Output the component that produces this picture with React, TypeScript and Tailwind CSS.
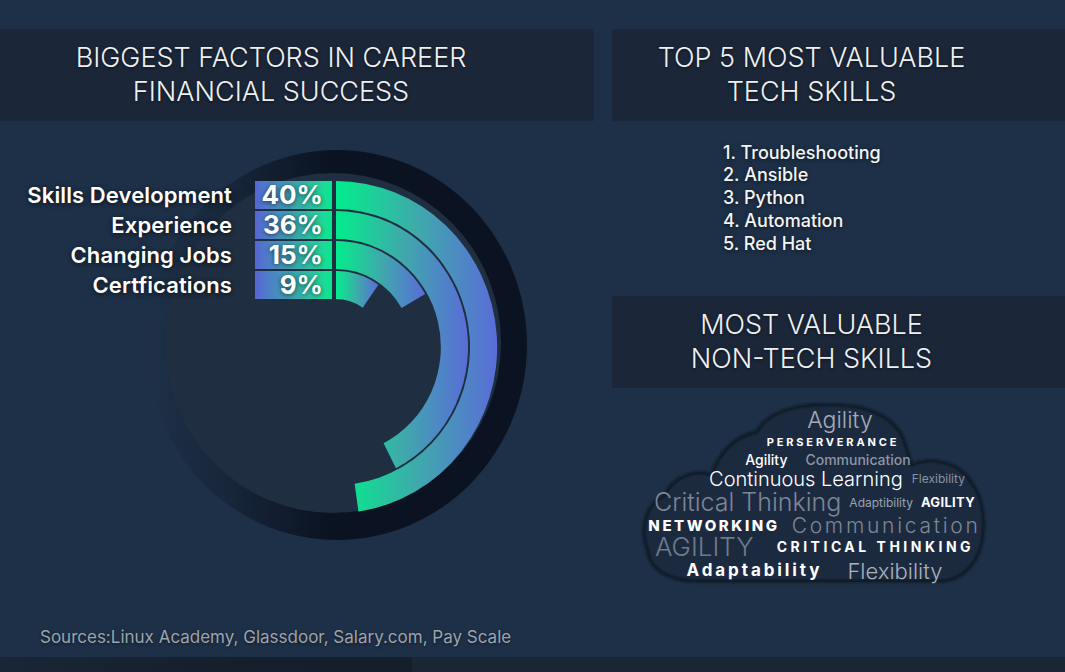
import React from 'react';

const FONT = { fontFamily: 'Inter, "Noto Sans", sans-serif' };

const rows = [
  { label: 'Skills Development', pct: '40%', deg: 172 },
  { label: 'Experience', pct: '36%', deg: 153 },
  { label: 'Changing Jobs', pct: '15%', deg: 60 },
  { label: 'Certfications', pct: '9%', deg: 35 },
];

const techSkills = ['Troubleshooting', 'Ansible', 'Python', 'Automation', 'Red Hat'];

// annular sector, slightly stretched vertically like the original artwork
const sector = (cx: number, cy: number, ro: number, ri: number, deg: number, k = 1.03) => {
  const a = (deg * Math.PI) / 180;
  const rxo = ro / k;
  const rxi = ri / k;
  const large = deg > 180 ? 1 : 0;
  const ox = cx + rxo * Math.sin(a);
  const oy = cy - ro * Math.cos(a);
  const ix = cx + rxi * Math.sin(a);
  const iy = cy - ri * Math.cos(a);
  return `M ${cx} ${cy - ro} A ${rxo} ${ro} 0 ${large} 1 ${ox} ${oy} L ${ix} ${iy} A ${rxi} ${ri} 0 ${large} 0 ${cx} ${cy - ri} Z`;
};

const Chart: React.FC = () => (
  <div className="relative h-[506px]">
    <svg className="absolute inset-0" width={594} height={506} viewBox="0 0 594 506">
      <defs>
        <linearGradient id="ring" x1="0" y1="0" x2="1" y2="0">
          <stop offset="0" stopColor="#0b1322" stopOpacity="0" />
          <stop offset="0.22" stopColor="#0b1322" stopOpacity="0.35" />
          <stop offset="0.48" stopColor="#0b1322" stopOpacity="1" />
          <stop offset="1" stopColor="#0b1322" stopOpacity="1" />
        </linearGradient>
        <linearGradient id="arc" x1="0" y1="0" x2="1" y2="0">
          <stop offset="0" stopColor="#00ec8e" />
          <stop offset="0.12" stopColor="#10de92" />
          <stop offset="0.5" stopColor="#3eaaab" />
          <stop offset="1" stopColor="#5a6cd8" />
        </linearGradient>
      </defs>
      <ellipse cx={337} cy={224} rx={190} ry={195} fill="url(#ring)" />
      <ellipse cx={333} cy={222} rx={168} ry={170} fill="#1f2e40" />
      {rows.map((r, i) => (
        <path key={r.label} d={sector(336, 226, 166 - i * 30, 138 - i * 30, r.deg)} fill="url(#arc)" />
      ))}
    </svg>

    <div className="relative z-10 flex flex-col gap-[2px] pt-[60px]">
      {rows.map((r) => (
        <div key={r.label} className="flex items-center h-[28px]">
          <div className="w-[232px] text-right text-white font-semibold text-[22px] tracking-[0.005em] leading-none [text-shadow:0_1px_5px_rgba(0,0,0,0.7)]">
            {r.label}
          </div>
          <div className="ml-[23px] w-[77px] h-[28px] flex items-center justify-end pr-[9px] bg-gradient-to-r from-[#5666d4] via-[#3aa5ae] to-[#02e88e]">
            <span className="text-white font-bold text-[26px] leading-none [text-shadow:0_1px_5px_rgba(0,0,0,0.6)]">{r.pct}</span>
          </div>
        </div>
      ))}
    </div>
  </div>
);

const Cloud: React.FC = () => (
  <div className="relative h-[200px] pt-[21px] ml-[28px] w-[355px]">
    <svg className="absolute left-0 top-0" width={355} height={200} viewBox="640 389 355 200">
      <defs>
        <filter id="soft" x="-10%" y="-10%" width="120%" height="120%">
          <feGaussianBlur stdDeviation="1.1" />
        </filter>
      </defs>
      <path
        d="M 697 582 C 672 582 650 572 648 552 C 640 530 645 505 665 497 C 672 478 695 470 712 476 C 718 455 735 437 757 433 C 768 412 800 404 835 406 C 870 406 898 420 905 445 C 908 455 910 462 912 466 C 930 458 960 462 972 485 C 988 505 988 550 968 570 C 960 578 950 582 940 582 Z"
        fill="#1c2b3f"
        stroke="#111a28"
        strokeWidth={3.5}
        filter="url(#soft)"
      />
    </svg>
    <div className="relative flex flex-col">
      <div className="h-[24px] flex items-center justify-center pl-[45px]">
        <span className="font-light text-[23px] leading-none text-[#a5acb6]">Agility</span>
      </div>
      <div className="h-[20px] flex items-center justify-center pl-[31px]">
        <span className="font-bold text-[11px] leading-none tracking-[0.26em] text-white">PERSERVERANCE</span>
      </div>
      <div className="h-[14px] flex items-center justify-center gap-[18px] pl-[21px]">
        <span className="font-medium text-[14px] leading-none text-white">Agility</span>
        <span className="font-medium text-[14px] leading-none text-[#8e97a4]">Communication</span>
      </div>
      <div className="h-[24px] flex items-center justify-center gap-[9px] pl-[39px]">
        <span className="font-light text-[20px] leading-none text-white">Continuous Learning</span>
        <span className="text-[12px] leading-none text-[#8a93a0]">Flexibility</span>
      </div>
      <div className="h-[24px] flex items-center justify-center gap-[8px] pr-[6px]">
        <span className="font-light text-[25px] leading-none text-[#7c8695]">Critical Thinking</span>
        <span className="text-[12px] leading-none text-[#9aa2ad]">Adaptibility</span>
        <span className="font-bold text-[13px] leading-none tracking-wide text-white">AGILITY</span>
      </div>
      <div className="h-[22px] flex items-center justify-center gap-[12px] pr-[6px]">
        <span className="font-extrabold text-[15px] leading-none tracking-[0.17em] text-white">NETWORKING</span>
        <span className="font-light text-[21px] leading-none tracking-[0.13em] text-[#7d8794]">Communication</span>
      </div>
      <div className="h-[20px] flex items-center justify-center gap-[23px] pr-[6px]">
        <span className="font-light text-[26px] leading-[20px] text-[#6f7a89]">AGILITY</span>
        <span className="font-bold text-[14px] leading-none tracking-[0.25em] text-white">CRITICAL THINKING</span>
      </div>
      <div className="h-[28px] flex items-center justify-center gap-[25px] pr-[6px]">
        <span className="font-bold text-[17px] leading-none tracking-[0.17em] text-white">Adaptability</span>
        <span className="font-light text-[22px] leading-none text-[#aab1ba]">Flexibility</span>
      </div>
    </div>
  </div>
);

const Heading: React.FC<{ lines: string[]; shift: string }> = ({ lines, shift }) => (
  <div className={`h-[92px] bg-[#1b2638] flex flex-col justify-center text-center ${shift}`}>
    {lines.map((l) => (
      <div key={l} className="font-light text-[27px] leading-[34px] text-[#eef0f2] [text-shadow:0_1px_3px_rgba(0,0,0,0.5)]">
        {l}
      </div>
    ))}
  </div>
);

export default function App() {
  return (
    <div className="w-[1065px] h-[672px] bg-[#1e3047] overflow-hidden flex flex-col pt-[29px]" style={FONT}>
      <div className="flex h-[628px] gap-[18px]">
        <div className="w-[594px] flex flex-col">
          <Heading lines={['BIGGEST FACTORS IN CAREER', 'FINANCIAL SUCCESS']} shift="pr-[52px]" />
          <Chart />
          <p className="pl-[40px] text-[17px] leading-[20px] text-[#9ba3ad] [text-shadow:0_1px_3px_rgba(0,0,0,0.5)]">
            Sources:Linux Academy, Glassdoor, Salary.com, Pay Scale
          </p>
        </div>

        <div className="flex-1 flex flex-col">
          <Heading lines={['TOP 5 MOST VALUABLE', 'TECH SKILLS']} shift="pr-[54px]" />
          <ol className="mt-[20.5px] pl-[111px] text-[18px] font-medium leading-[22.8px] text-[#f3f4f5] [text-shadow:0_1px_4px_rgba(0,0,0,0.6)]">
            {techSkills.map((s, i) => (
              <li key={s}>
                {i + 1}. {s}
              </li>
            ))}
          </ol>
          <div className="mt-[40.5px]">
            <Heading lines={['MOST VALUABLE', 'NON-TECH SKILLS']} shift="pr-[54px]" />
          </div>
          <Cloud />
        </div>
      </div>

      <div className="flex h-[15px]">
        <div className="w-[412px] bg-gradient-to-r from-[#192637] via-[#161f2d] to-[#151e2b]" />
        <div className="flex-1 bg-[#1a2536]" />
      </div>
    </div>
  );
}
